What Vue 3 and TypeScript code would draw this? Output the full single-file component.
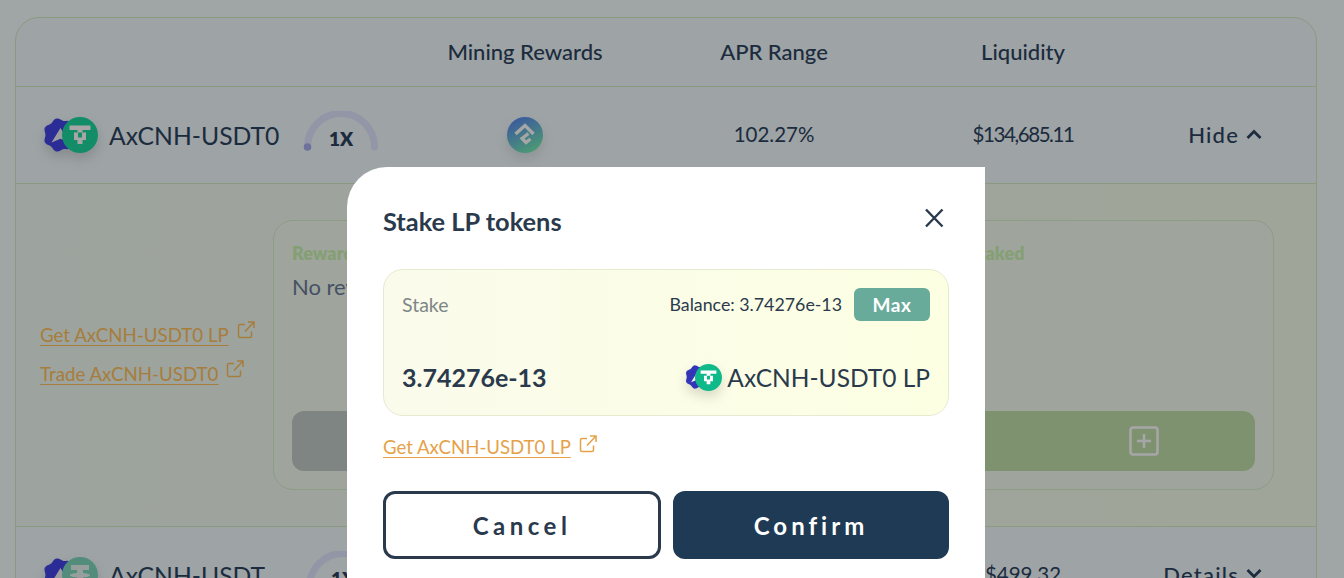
<script setup lang="ts">
const columns: string[] = ['Mining Rewards', 'APR Range', 'Liquidity']

// The pool token's badge outline: a circle with seven soft lobes.
const blobPath: string = Array.from({ length: 97 }, (_, i) => {
  const t = (i / 96) * Math.PI * 2
  const r = 16.6 + 1.2 * Math.cos(7 * t)
  return `${i ? 'L' : 'M'}${(18 + r * Math.cos(t)).toFixed(2)} ${(18 + r * Math.sin(t)).toFixed(2)}`
}).join(' ') + 'Z'
</script>

<template>
  <div class="page">
    <svg class="defs" width="0" height="0" aria-hidden="true">
      <defs>
        <linearGradient id="mine" x1="0.2" y1="0" x2="0.7" y2="1">
          <stop offset="0" stop-color="#5c86f6" />
          <stop offset="1" stop-color="#75eeb1" />
        </linearGradient>
        <symbol id="blob" viewBox="0 0 36 36">
          <path :d="blobPath" fill="currentColor" />
          <path d="M9 26 18.500 10.500 28 26 18.500 22Z" fill="#eef0f6" />
        </symbol>
        <symbol id="tzero" viewBox="0 0 36 36">
          <circle cx="18" cy="18" r="18" fill="currentColor" />
          <path d="M7.500 8.500h21v4.500h-8v2.500h3.500v7.500h-3.500v4h-5v-4H12v-7.500h3.500V13h-8Zm8.500 7v5h4v-5Z" fill="#fff" fill-rule="evenodd" />
        </symbol>
        <symbol id="tether" viewBox="0 0 36 36">
          <circle cx="18" cy="18" r="18" fill="currentColor" />
          <path d="M9 8h18v5h-6v3c4 .3 7 1.100 7 2.200s-3 1.900-7 2.200V29h-6v-8.600c-4-.3-7-1.100-7-2.200s3-1.900 7-2.200v-3H9Z" fill="#e7f4ef" />
        </symbol>
        <symbol id="ext" viewBox="0 0 18 18">
          <path d="M8 3.500H3a1.500 1.500 0 0 0-1.500 1.500v10A1.500 1.500 0 0 0 3 16.500h10a1.500 1.500 0 0 0 1.500-1.500v-4.500M8 10.500 16.500 1.500M11 1h6v6" fill="none" stroke="currentColor" stroke-width="1.500" />
        </symbol>
      </defs>
    </svg>

    <section class="table">
      <header class="grid head">
        <span></span>
        <span v-for="c in columns" :key="c" class="cell">{{ c }}</span>
        <span></span>
      </header>

      <div class="grid row">
        <div class="pool">
          <span class="pair">
            <svg class="blob"><use href="#blob" /></svg>
            <svg class="coin"><use href="#tzero" /></svg>
          </span>
          <span class="name">AxCNH-USDT0</span>
          <span class="gauge">
            <svg width="76" height="42" viewBox="0 0 76 42">
              <path d="M4.500 36 A33.500 33.500 0 0 1 71.500 36" fill="none" stroke="#e1e7ff" stroke-width="7" stroke-linecap="round" />
              <circle cx="4.500" cy="36" r="3.800" fill="#a9aef0" />
            </svg>
            <b>1X</b>
          </span>
        </div>
        <span class="cell">
          <svg class="mine" width="36" height="36" viewBox="0 0 36 36">
            <circle cx="18" cy="18" r="18" fill="url(#mine)" />
            <path d="M8.500 17 18 8.500l8.500 8.500" fill="none" stroke="#fff" stroke-width="3.400" />
            <path d="M21.500 16.500 15 21.500l4 4 4.500-3.500" fill="none" stroke="#fff" stroke-width="3.200" />
          </svg>
        </span>
        <span class="cell value">102.27%</span>
        <span class="cell value liquidity">$134,685.11</span>
        <span class="toggle">Hide
          <svg width="16" height="10" viewBox="0 0 16 10"><path d="M1.500 9 8 2.500 14.500 9" fill="none" stroke="currentColor" stroke-width="2.800" /></svg>
        </span>
      </div>

      <div class="expanded">
        <div class="links">
          <a>Get AxCNH-USDT0 LP</a><svg class="ext"><use href="#ext" /></svg>
          <br />
          <a>Trade AxCNH-USDT0</a><svg class="ext"><use href="#ext" /></svg>
        </div>
        <div class="panel">
          <div>
            <h4>Rewards</h4>
            <p>No rewards</p>
            <div class="btn grey"></div>
          </div>
          <div>
            <h4>Staked</h4>
            <p>&nbsp;</p>
            <div class="btn green">
              <svg width="30" height="30" viewBox="0 0 30 30">
                <rect x="1.500" y="1.500" width="27" height="27" rx="2.500" fill="none" stroke="#fff" stroke-width="2.600" />
                <path d="M15 8v14M8 15h14" stroke="#fff" stroke-width="2.600" />
              </svg>
            </div>
          </div>
        </div>
      </div>

      <div class="grid row">
        <div class="pool">
          <span class="pair">
            <svg class="blob"><use href="#blob" /></svg>
            <svg class="coin muted"><use href="#tether" /></svg>
          </span>
          <span class="name">AxCNH-USDT</span>
          <span class="gauge gauge-b">
            <svg width="76" height="42" viewBox="0 0 76 42">
              <path d="M4.500 36 A33.500 33.500 0 0 1 71.500 36" fill="none" stroke="#e1e7ff" stroke-width="7" stroke-linecap="round" />
            </svg>
            <b>1X</b>
          </span>
        </div>
        <span class="cell"></span>
        <span class="cell value"></span>
        <span class="cell value">$499.32</span>
        <span class="toggle">Details
          <svg width="16" height="10" viewBox="0 0 16 10"><path d="M1.500 1 8 7.500 14.500 1" fill="none" stroke="currentColor" stroke-width="2.800" /></svg>
        </span>
      </div>
    </section>

    <div class="overlay"></div>

    <div class="modal">
      <div class="modal-head">
        <h2>Stake LP tokens</h2>
        <svg width="20" height="20" viewBox="0 0 20 20"><path d="M2 1.500l16.500 17M18.500 1.500 2 18.500" fill="none" stroke="#2a3a4c" stroke-width="2.400" /></svg>
      </div>
      <div class="box">
        <div class="box-top">
          <span class="muted-label">Stake</span>
          <span class="balance">Balance: 3.74276e-13</span>
          <button class="max">Max</button>
        </div>
        <div class="box-bottom">
          <span class="amount">3.74276e-13</span>
          <span class="token">
            <span class="pair small">
              <svg class="blob"><use href="#blob" /></svg>
              <svg class="coin"><use href="#tzero" /></svg>
            </span>
            AxCNH-USDT0 LP
          </span>
        </div>
      </div>
      <div class="get">
        <a>Get AxCNH-USDT0 LP</a><svg class="ext"><use href="#ext" /></svg>
      </div>
      <div class="actions">
        <button class="cancel">Cancel</button>
        <button class="confirm">Confirm</button>
      </div>
    </div>
  </div>
</template>

<style scoped>
.page {
  position: relative;
  height: 578px;
  overflow: hidden;
  box-sizing: border-box;
  padding: 17px 27px 0 15px;
  background: #f6feff;
  color: #2c4460;
  font-family: Lato, "Open Sans", sans-serif;
}
.defs { position: absolute; }
.table {
  border: 1px solid #d4edc4;
  border-radius: 24px;
  background: #f3fbfe;
}
.grid {
  display: grid;
  grid-template-columns: 384.5px 249px 249px 249px 1fr;
  align-items: center;
  border-bottom: 1px solid #d4edc4;
}
.head { height: 66px; padding-bottom: 2px; font-size: 22px; font-weight: 500; }
.row { height: 96px; }
.row:last-child { border-bottom: 0; }
.cell { text-align: center; }
.value { font-size: 20.500px; padding-bottom: 2px; }
.liquidity { letter-spacing: -1.400px; }
.pool { display: flex; align-items: center; padding-left: 27px; position: relative; }
.pair {
  display: block;
  position: relative;
  width: 55px;
  height: 36px;
  flex: none;
  filter: drop-shadow(0 6px 6px rgba(0, 0, 0, .14));
}
.blob { position: absolute; left: 0; top: 1px; width: 34px; height: 34px; color: #4444e6; }
.coin { position: absolute; right: 0; top: 0; width: 36px; height: 36px; color: #1dd9a0; }
.coin.muted { color: #7fd8bd; }
.name { margin-left: 11px; font-size: 24.700px; white-space: nowrap; }
.gauge { position: absolute; left: 287px; top: -6px; width: 76px; height: 42px; }
.gauge svg { display: block; }
.gauge b {
  position: absolute;
  left: 0;
  right: 0;
  top: 16px;
  text-align: center;
  font-size: 19px;
  font-weight: 800;
}
.gauge-b { left: 289px; }
.mine { display: block; margin: 0 auto; filter: drop-shadow(0 6px 6px rgba(0, 0, 0, .1)); }
.toggle {
  display: flex;
  align-items: center;
  justify-content: flex-end;
  gap: 7px;
  padding: 0 54px 2px 0;
  font-size: 22px;
  font-weight: 500;
  letter-spacing: 1.200px;
}
.expanded {
  display: flex;
  align-items: center;
  padding: 36px 42px 36px 24px;
  border-bottom: 1px solid #d4edc4;
  background: linear-gradient(90deg, #f2fbf3, #f5fdeb);
}
.links { width: 233px; flex: none; font-size: 18.700px; line-height: 39px; color: #ffc15c; }
a { text-decoration: underline; text-underline-offset: 3px; }
.ext { width: 18px; height: 18px; margin-left: 8px; vertical-align: 3px; }
.panel {
  flex: 1;
  box-sizing: border-box;
  height: 270px;
  display: grid;
  grid-template-columns: 1fr 286px;
  column-gap: 20px;
  padding: 21px 18px 18px;
  border: 1px solid #d8f0cd;
  border-radius: 20px;
  background: #f5fdf2;
}
.panel > div { display: flex; flex-direction: column; }
h4 { margin: 0; font-size: 18px; line-height: 22px; font-weight: 800; color: #cdf5b4; }
.panel p { margin: 9px 0 0; font-size: 22px; line-height: 28px; color: #6b7c9a; }
.btn { margin-top: auto; height: 60px; border-radius: 12px; display: flex; align-items: center; }
.grey { background: #c3cdc8; }
.green { background: #c2e1ac; justify-content: flex-end; padding-right: 96px; }
.overlay {
  position: absolute;
  inset: 0;
  background: rgba(0, 0, 0, .35);
  backdrop-filter: blur(.5px);
}
.modal {
  position: absolute;
  left: 347px;
  top: 167px;
  width: 638px;
  height: 430px;
  box-sizing: border-box;
  padding: 36px 36px 0;
  background: #fff;
  border-radius: 40px 0 0 0;
  color: #2a3a4c;
}
.modal-head { display: flex; justify-content: space-between; align-items: flex-start; height: 66px; padding-right: 5px; }
.modal-head svg { margin-top: 5px; }
h2 { margin: 0; font-size: 25.400px; line-height: 37px; font-weight: 700; }
.box {
  box-sizing: border-box;
  height: 147px;
  padding: 18px 18px 0;
  border: 1px solid #e6ebd0;
  border-radius: 20px;
  background: linear-gradient(90deg, #fafbeb, #fdffe3);
}
.box-top { display: flex; align-items: center; height: 33px; padding-bottom: 1px; box-sizing: border-box; }
.muted-label { font-size: 19.500px; color: #7d8788; }
.balance { margin-left: auto; font-size: 17.800px; }
.max {
  margin-left: 12px;
  width: 76px;
  height: 33px;
  padding: 0;
  border: 0;
  border-radius: 6px;
  background: #68ab9b;
  color: #fff;
  font: 700 19px Lato, sans-serif;
  letter-spacing: .5px;
}
.box-bottom { display: flex; align-items: center; justify-content: space-between; margin-top: 41px; }
.amount { font-size: 25px; font-weight: 700; }
.token { display: flex; align-items: center; gap: 5px; font-size: 24.500px; }
.small { width: 37px; height: 27px; }
.small .blob { width: 24px; height: 24px; top: 1.500px; color: #3434b8; }
.small .coin { width: 27px; height: 27px; color: #10b98a; }
.get { height: 75px; padding-top: 19px; box-sizing: border-box; font-size: 18.600px; color: #e5a24a; }
.get .ext { margin-left: 8px; vertical-align: 1px; }
.actions { display: flex; gap: 12px; }
button { font-family: Lato, sans-serif; }
.cancel, .confirm {
  height: 68px;
  box-sizing: border-box;
  border-radius: 12px;
  font-size: 24px;
  font-weight: 700;
  letter-spacing: 4px;
}
.cancel { width: 278px; border: 3px solid #2a3a4c; background: #fff; color: #2a3a4c; letter-spacing: 4.500px; }
.confirm { width: 276px; border: 0; background: #1f3a54; color: #fff; }
</style>
